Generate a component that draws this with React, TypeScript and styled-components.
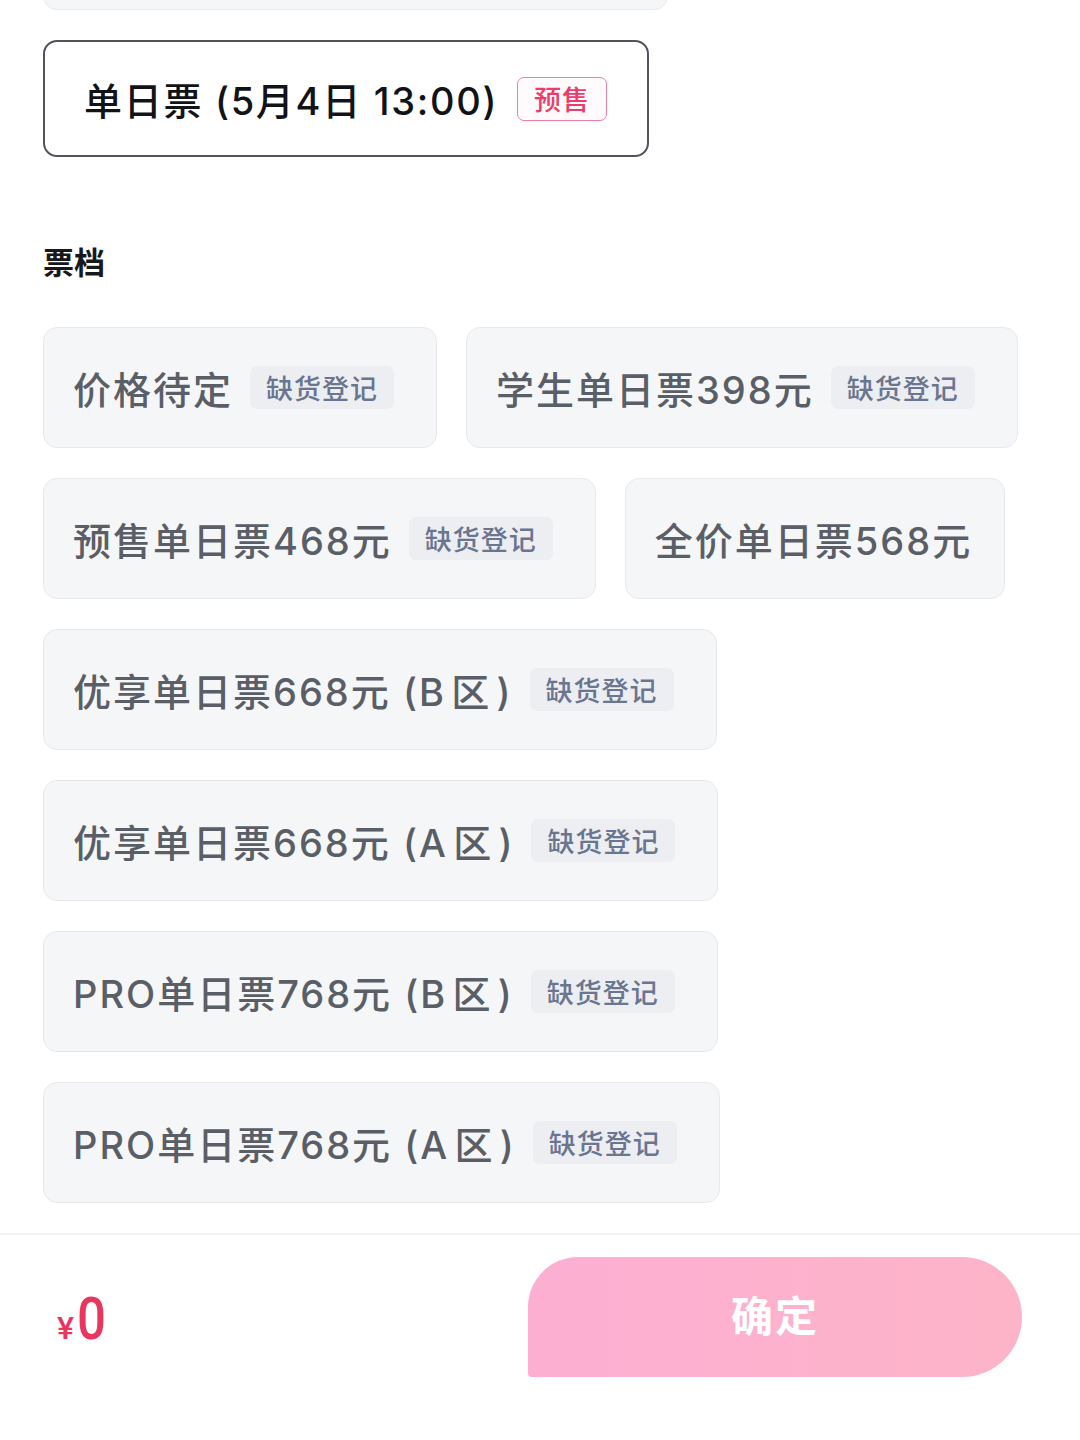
import React from 'react'
import styled, { createGlobalStyle } from 'styled-components'

const GlobalStyle = createGlobalStyle`
  html, body {
    margin: 0;
    padding: 0;
    background: #ffffff;
  }
  body {
    font-family: "Noto Sans CJK SC", "Noto Sans", sans-serif;
    -webkit-font-smoothing: antialiased;
  }
`

const Page = styled.div`
  width: 1080px;
  height: 1440px;
  display: flex;
  flex-direction: column;
  overflow: hidden;
  background: #fff;
`

const Scroll = styled.div`
  flex: 1;
  padding: 0 43px;
  overflow: hidden;
`

const DateList = styled.div`
  display: flex;
  flex-direction: column;
  align-items: flex-start;
  gap: 30px;
`

const DateCard = styled.div<{ $active?: boolean; $hidden?: boolean }>`
  box-sizing: border-box;
  height: 117px;
  display: flex;
  align-items: center;
  padding: 0 40px 0 39px;
  border-radius: 14px;
  background: ${p => (p.$active ? '#ffffff' : '#f5f6f8')};
  border: ${p => (p.$active ? '2px solid #50555c' : '1px solid #e7e9ec')};
  margin-top: ${p => (p.$hidden ? '-107px' : '0')};
`

const DateTitle = styled.span`
  font-family: Inter, "Noto Sans CJK SC", sans-serif;
  font-size: 38px;
  font-weight: 500;
  color: #111317;
  letter-spacing: 1.7px;
  white-space: nowrap;
`

const PresaleBadge = styled.span`
  box-sizing: border-box;
  height: 44px;
  margin-left: 19px;
  padding: 0 16px;
  display: flex;
  align-items: center;
  border: 1.5px solid #f07fa0;
  border-radius: 7px;
  color: #ec3c6c;
  font-size: 27px;
  font-weight: 500;
  letter-spacing: 1px;
  background: #fffafc;
`

const SectionTitle = styled.div`
  margin-top: 84px;
  font-size: 31px;
  font-weight: 700;
  color: #16181c;
  line-height: 40px;
`

const TierGrid = styled.div`
  margin-top: 46px;
  display: flex;
  flex-wrap: wrap;
  gap: 30px 29px;
`

const TierCard = styled.div`
  box-sizing: border-box;
  height: 121px;
  display: flex;
  align-items: center;
  padding: 0 32px 0 29px;
  border-radius: 14px;
  background: #f5f6f8;
  border: 1px solid #e7e9ec;
`

const TierName = styled.span`
  font-family: Inter, "Noto Sans CJK SC", sans-serif;
  font-size: 38px;
  font-weight: 500;
  color: #5a5e66;
  letter-spacing: 2px;
  white-space: nowrap;
`

const SoldOutTag = styled.span`
  height: 43px;
  margin-left: 17px;
  margin-right: 10px;
  padding: 0 16px;
  display: flex;
  align-items: center;
  border-radius: 7px;
  background: #eceef2;
  color: #6a7590;
  font-size: 27px;
  font-weight: 500;
  letter-spacing: 1px;
  white-space: nowrap;
`

const BottomBar = styled.div`
  height: 207px;
  box-sizing: border-box;
  border-top: 2px solid #f3f4f6;
  display: flex;
  align-items: flex-start;
  justify-content: space-between;
  padding: 22px 58px 0 57px;
`

const Price = styled.div`
  margin-top: 30px;
  display: flex;
  align-items: baseline;
  color: #e8365f;
  font-family: Roboto, "Noto Sans", sans-serif;
`

const Yen = styled.span`
  font-size: 32px;
  font-weight: 500;
  margin-right: 3px;
`

const Amount = styled.span`
  display: inline-block;
  font-size: 60px;
  font-weight: 500;
  line-height: 64px;
  transform: scaleX(0.85);
  transform-origin: left center;
`

const ConfirmButton = styled.button`
  width: 494px;
  height: 120px;
  border: none;
  border-radius: 50px 60px 60px 4px;
  background: linear-gradient(90deg, #fdafd3 0%, #fdb4c8 100%);
  color: #fff;
  font-family: "Noto Sans CJK SC", sans-serif;
  font-size: 42px;
  font-weight: 700;
  letter-spacing: 2px;
  padding-bottom: 8px;
  cursor: pointer;
`

const tiers = [
  { name: '价格待定', soldOut: true },
  { name: '学生单日票398元', soldOut: true },
  { name: '预售单日票468元', soldOut: true },
  { name: '全价单日票568元', soldOut: false },
  { name: '优享单日票668元 (B\u200A区\u200A)', soldOut: true },
  { name: '优享单日票668元 (A\u200A区\u200A)', soldOut: true },
  { name: 'PRO单日票768元 (B\u200A区\u200A)', soldOut: true },
  { name: 'PRO单日票768元 (A\u200A区\u200A)', soldOut: true },
]

export default function App() {
  return (
    <Page>
      <GlobalStyle />
      <Scroll>
        <DateList>
          <DateCard $hidden style={{ width: 625 }} />
          <DateCard $active>
            <DateTitle>单日票 (5月4日 13:00)</DateTitle>
            <PresaleBadge>预售</PresaleBadge>
          </DateCard>
        </DateList>

        <SectionTitle>票档</SectionTitle>

        <TierGrid>
          {tiers.map(t => (
            <TierCard key={t.name}>
              <TierName>{t.name}</TierName>
              {t.soldOut && <SoldOutTag>缺货登记</SoldOutTag>}
            </TierCard>
          ))}
        </TierGrid>
      </Scroll>

      <BottomBar>
        <Price>
          <Yen>¥</Yen>
          <Amount>0</Amount>
        </Price>
        <ConfirmButton>确定</ConfirmButton>
      </BottomBar>
    </Page>
  )
}
